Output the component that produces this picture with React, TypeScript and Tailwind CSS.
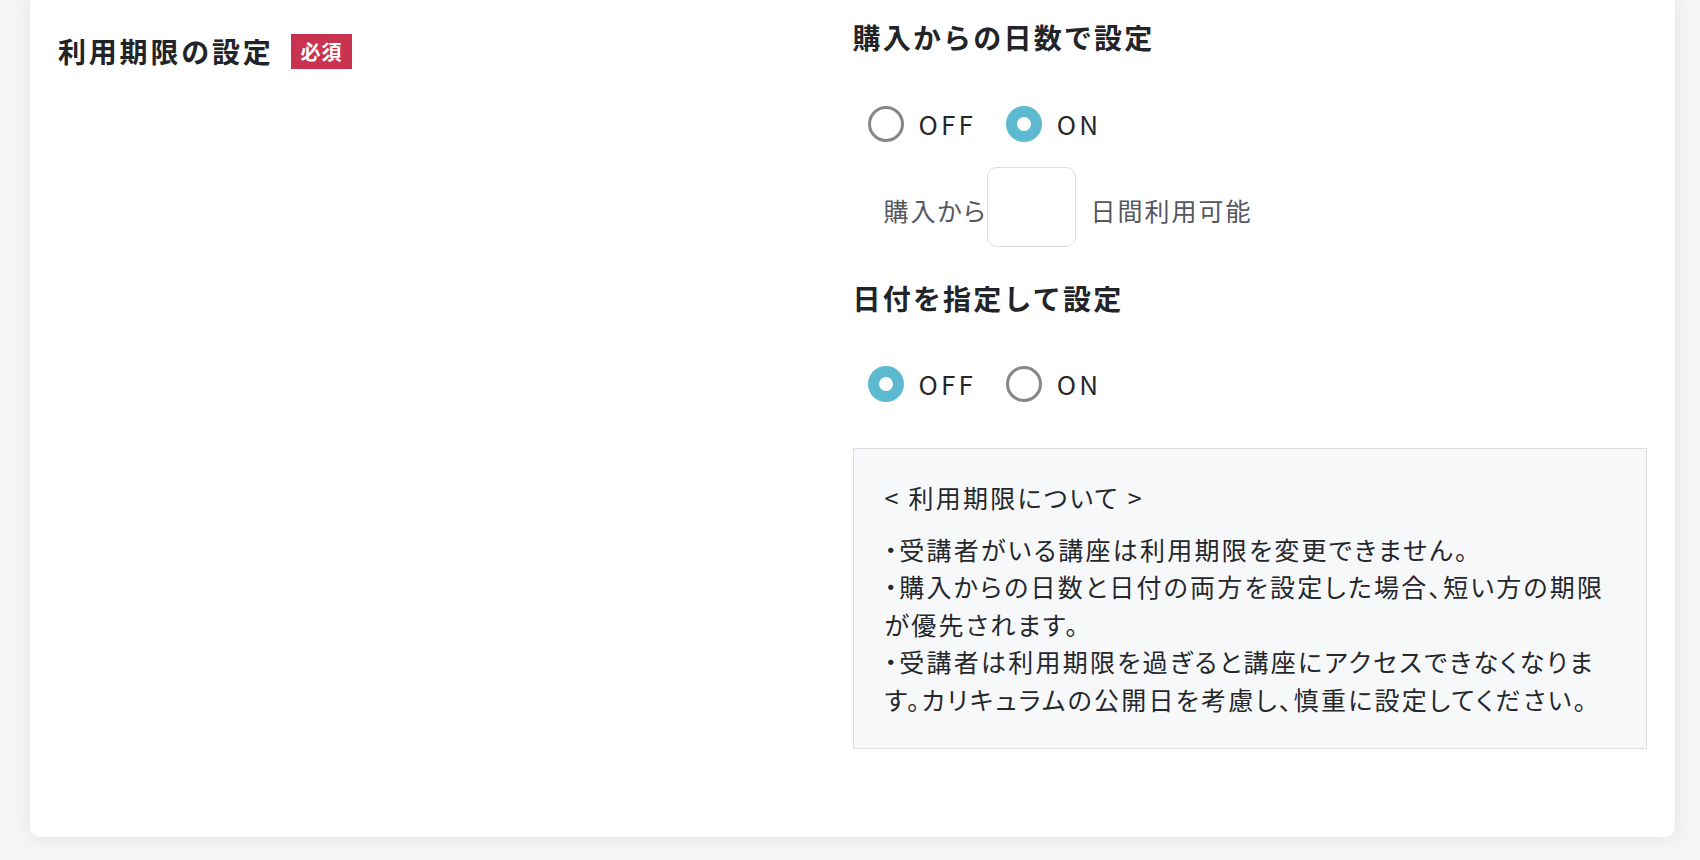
import React from "react";

const font = {
  fontFamily: '"Noto Sans CJK JP", "Noto Sans", sans-serif',
};

function Radio({ label, checked }: { label: string; checked: boolean }) {
  return (
    <label className="flex items-center gap-[15px] cursor-pointer">
      {checked ? (
        <span className="flex h-[36px] w-[36px] items-center justify-center rounded-full bg-[#5cb9cf]">
          <span className="h-[14px] w-[14px] rounded-full bg-white" />
        </span>
      ) : (
        <span className="h-[36px] w-[36px] rounded-full border-[3px] border-[#878787] bg-white" />
      )}
      <span className="text-[26px] leading-none tracking-[0.12em] text-[#25272b]">
        {label}
      </span>
    </label>
  );
}

function RadioGroup({ value }: { value: "off" | "on" }) {
  return (
    <div className="flex items-center gap-[30px] pl-[15px]">
      <Radio label="OFF" checked={value === "off"} />
      <Radio label="ON" checked={value === "on"} />
    </div>
  );
}

export default function App() {
  return (
    <div
      className="min-h-[860px] bg-[#f4f5f7] pl-[30px] pr-[25px] pb-[23px]"
      style={font}
    >
      <div className="grid grid-cols-2 rounded-b-[10px] bg-white px-[28px] pt-[18px] pb-[88px] shadow-[0_0_20px_rgba(0,0,0,0.08)]">
        {/* left: label */}
        <div className="flex items-center gap-[17px] self-start pt-[14px]">
          <h2 className="text-[28px] font-bold leading-[39px] tracking-[2.8px] text-[#222428]">
            利用期限の設定
          </h2>
          <span className="flex h-[35px] items-center bg-[#c9334f] px-[10px] text-[20px] font-bold tracking-[0.04em] text-white">
            必須
          </span>
        </div>

        {/* right: settings */}
        <div className="flex flex-col">
          <h3 className="text-[28px] font-bold leading-[39px] tracking-[2.2px] text-[#222428]">
            購入からの日数で設定
          </h3>
          <div className="mt-[49px]">
            <RadioGroup value="on" />
          </div>
          <div className="mt-[25px] flex items-center pl-[31px] text-[25px] tracking-[0.08em] text-[#55585c] [font-feature-settings:'palt']">
            <span className="pt-[8px]">購入から</span>
            <input
              type="text"
              className="h-[80px] w-[89px] rounded-[10px] border border-[#dcdde0] bg-white px-2 text-center text-[24px] outline-none"
            />
            <span className="ml-[14px] pt-[8px]">日間利用可能</span>
          </div>

          <h3 className="mt-[32px] text-[28px] font-bold leading-[39px] tracking-[2.2px] text-[#222428]">
            日付を指定して設定
          </h3>
          <div className="mt-[48px]">
            <RadioGroup value="off" />
          </div>

          <div className="mt-[46px] border border-[#dcdde0] bg-[#f7f8fa] px-[31px] pt-[30px] pb-[30px] text-[25px] leading-[1.5] tracking-[0.09em] text-[#25272b] [font-feature-settings:'palt']">
            <p>&lt; 利用期限について &gt;</p>
            <div className="mt-[14px]">
              <p>・受講者がいる講座は利用期限を変更できません。</p>
              <p>
                ・購入からの日数と日付の両方を設定した場合、短い方の期限が優先されます。
              </p>
              <p>
                ・受講者は利用期限を過ぎると講座にアクセスできなくなります。カリキュラムの公開日を考慮し、慎重に設定してください。
              </p>
            </div>
          </div>
        </div>
      </div>
    </div>
  );
}
